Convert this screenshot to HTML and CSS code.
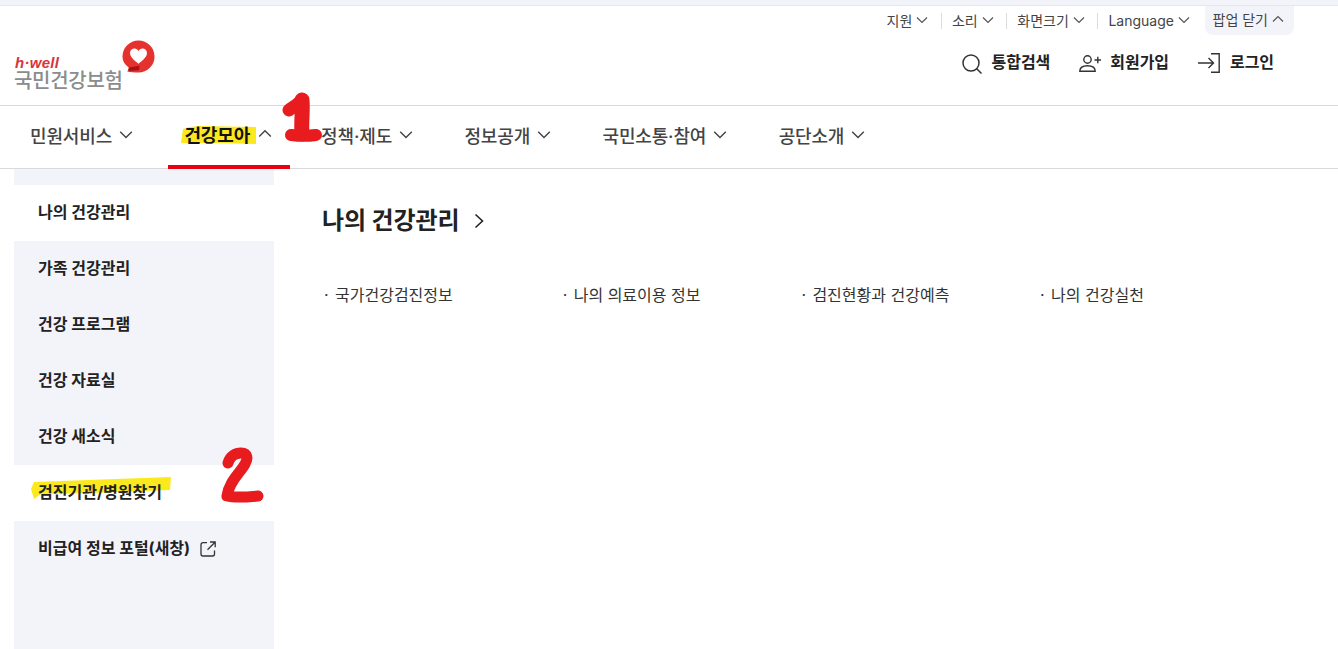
FILE: index.html
```html
<!DOCTYPE html>
<html lang="ko">
<head>
<meta charset="utf-8">
<title>국민건강보험</title>
<link rel="stylesheet" href="styles.css">
</head>
<body>
<svg class="sprite" width="0" height="0" aria-hidden="true">
  <symbol id="down" viewBox="0 0 12 8"><path d="M1 1.500 6 6.500 11 1.500" fill="none" stroke="currentColor" stroke-width="1.200"/></symbol>
  <symbol id="up" viewBox="0 0 12 8"><path d="M1 6.500 6 1.500 11 6.500" fill="none" stroke="currentColor" stroke-width="1.200"/></symbol>
</svg>
<div class="page">
  <div class="top-strip"></div>
  <div class="util">
    <a class="util-item">지원<svg class="chev-s"><use href="#down"/></svg></a>
    <a class="util-item sep">소리<svg class="chev-s"><use href="#down"/></svg></a>
    <a class="util-item sep">화면크기<svg class="chev-s"><use href="#down"/></svg></a>
    <a class="util-item sep">Language<svg class="chev-s"><use href="#down"/></svg></a>
    <a class="util-item popup">팝업 닫기<svg class="chev-s"><use href="#up"/></svg></a>
  </div>
  <header class="brand-row">
    <div class="logo">
      <div class="logo-text">
        <span class="logo-en">h·well</span>
        <span class="logo-ko">국민건강보험</span>
      </div>
      <svg class="logo-mark" viewBox="0 0 36 36">
        <path d="M18 1.500A16.500 16.500 0 1 1 18 34.500C14 34.500 9.500 34.500 6.500 33.500L8.200 29.500C3.800 26.500 1.500 22.500 1.500 18A16.500 16.500 0 0 1 18 1.500Z" fill="#e5322f"/>
        <path d="M8 29.200 19 27.500 18.500 32 8 33Z" fill="#a81216"/>
        <path d="M18 25.500C13 21.500 9.300 18.500 9.300 14.500 9.300 11.500 11.500 9.800 13.800 9.800 15.700 9.800 17.200 10.800 18 12.300 18.800 10.800 20.300 9.800 22.200 9.800 24.500 9.800 26.700 11.500 26.700 14.500 26.700 18.500 23 21.500 18 25.500Z" fill="#fff"/>
      </svg>
    </div>
    <nav class="actions">
      <a class="action">
        <svg class="act-icon search" viewBox="0 0 20 20"><circle cx="9" cy="9" r="8" fill="none" stroke="#333" stroke-width="1.500"/><path d="M14.500 14.500 19.500 19.500" stroke="#333" stroke-width="1.500"/></svg>통합검색</a>
      <a class="action">
        <svg class="act-icon join" viewBox="0 0 22 17"><circle cx="8.500" cy="4.500" r="3.700" fill="none" stroke="#333" stroke-width="1.400"/><path d="M.8 16.200C.8 12.500 3.500 10.800 8.500 10.800S16.200 12.500 16.200 16.200Z" fill="none" stroke="#333" stroke-width="1.400"/><path d="M15.500 5H22M18.800 1.800V8.200" stroke="#333" stroke-width="1.400"/></svg>회원가입</a>
      <a class="action">
        <svg class="act-icon login" viewBox="0 0 22 20"><path d="M13 .8H21.200V19.200H13" fill="none" stroke="#333" stroke-width="1.400"/><path d="M0 10H15.500M10.500 5 15.500 10 10.500 15" fill="none" stroke="#333" stroke-width="1.400"/></svg>로그인</a>
    </nav>
  </header>
  <nav class="gnb">
    <a class="gnb-item">민원서비스<svg class="chev-m"><use href="#down"/></svg></a>
    <a class="gnb-item active"><span class="mark-wrap"><svg class="hl-nav" viewBox="0 0 75 18" preserveAspectRatio="none"><path d="M2 3 8 1 20 0 75 1 75 18 30 17 0 17Z" fill="#fbe91e"/></svg><span class="mark-text">건강모아</span></span><svg class="chev-m"><use href="#up"/></svg></a>
    <a class="gnb-item">정책·제도<svg class="chev-m"><use href="#down"/></svg></a>
    <a class="gnb-item">정보공개<svg class="chev-m"><use href="#down"/></svg></a>
    <a class="gnb-item">국민소통·참여<svg class="chev-m"><use href="#down"/></svg></a>
    <a class="gnb-item">공단소개<svg class="chev-m"><use href="#down"/></svg></a>
  </nav>
  <main class="panel">
    <aside class="side">
      <div class="side-pad"></div>
      <a class="side-item current">나의 건강관리</a>
      <a class="side-item">가족 건강관리</a>
      <a class="side-item">건강 프로그램</a>
      <a class="side-item">건강 자료실</a>
      <a class="side-item">건강 새소식</a>
      <a class="side-item current"><span class="mark-wrap"><svg class="hl-side" viewBox="0 0 140 22" preserveAspectRatio="none"><path d="M3 5 140 0 139 13 60 16 10 17 3 22 0 12Z" fill="#fbe91e"/></svg><span class="mark-text">검진기관/병원찾기</span></span></a>
      <a class="side-item">비급여 정보 포털(새창)
        <svg class="ext" viewBox="0 0 16 16"><path d="M7 1.700H3A2 2 0 0 0 1 3.700V13A2 2 0 0 0 3 15H12.500A2 2 0 0 0 14.500 13V9.500M10 1H15.200V6.200M15 1.200 7.500 8.700" fill="none" stroke="#333" stroke-width="1.300"/></svg>
      </a>
    </aside>
    <section class="content">
      <h2 class="title">나의 건강관리<svg class="title-chev" viewBox="0 0 10 16"><path d="M1.500 1.500 8.500 8 1.500 14.500" fill="none" stroke="#222" stroke-width="1.600"/></svg></h2>
      <ul class="links">
        <li>국가건강검진정보</li>
        <li>나의 의료이용 정보</li>
        <li>검진현황과 건강예측</li>
        <li>나의 건강실천</li>
      </ul>
    </section>
  </main>
  <svg class="scribble one" viewBox="0 0 46 52"><path d="M10 18C15 15 19 12 23 8" fill="none" stroke="#e81c1f" stroke-width="13" stroke-linecap="round" stroke-linejoin="round"/><path d="M23 8C24 20 22 30 23 42" fill="none" stroke="#e81c1f" stroke-width="15" stroke-linecap="round"/><path d="M12 43C20 44 30 44 37 43" fill="none" stroke="#e81c1f" stroke-width="12" stroke-linecap="round"/></svg>
  <svg class="scribble two" viewBox="0 0 55 60"><path d="M13 18C15 11 21 8 26 8 33 8 33 14 30 19 26 27 14 36 12 51 20 53 33 52 43 51" fill="none" stroke="#e81c1f" stroke-width="11" stroke-linecap="round" stroke-linejoin="round"/></svg>
</div>
</body>
</html>
```
FILE: styles.css
```css
* { box-sizing: border-box; }
html, body { margin: 0; height: 100%; }
body {
  background: #fff;
  color: #222;
  font-family: Inter, "Noto Sans CJK KR", sans-serif;
  overflow: hidden;
}
a { color: inherit; text-decoration: none; }
.sprite { position: absolute; }
.page { position: relative; width: 1338px; height: 649px; overflow: hidden; }
.top-strip { height: 6px; background: #f3f4fa; border-bottom: 1px solid #e6e6ee; }

.util {
  display: flex;
  justify-content: flex-end;
  align-items: flex-start;
  height: 29px;
  padding-right: 44px;
  font-size: 14px;
  color: #444;
}
.util-item { display: flex; align-items: center; gap: 4px; height: 28px; padding: 0 12.600px 0 11px; position: relative; }
.util-item.sep::before {
  content: "";
  position: absolute;
  left: 0;
  top: 7px;
  height: 16px;
  width: 1px;
  background: #ddd;
}
.util-item.popup { background: #f3f4fa; border-radius: 0 0 8px 8px; height: 29px; padding: 0 10px 3px 8px; margin-left: 2px; }
.chev-s { width: 12px; height: 8px; color: #555; }

.brand-row {
  display: flex;
  justify-content: space-between;
  height: 71px;
  padding: 0 64px 0 14px;
  border-bottom: 1px solid #d9d9d9;
}
.logo { display: flex; align-items: flex-start; padding-top: 5px; }
.logo-text { display: flex; flex-direction: column; padding-top: 15px; }
.logo-en { font: italic bold 15px/16px "Liberation Sans", sans-serif; color: #d8343a; padding-left: 1px; letter-spacing: 0.3px; }
.logo-ko { font-size: 20px; line-height: 20px; font-weight: 500; color: #8a8d8c; letter-spacing: -0.3px; white-space: nowrap; }
.logo-mark { width: 35px; height: 35px; margin: -1px 0 0 -2px; }

.actions { display: flex; gap: 29px; padding-top: 14px; }
.action { display: flex; align-items: flex-start; font-size: 16px; line-height: 26px; font-weight: 700; color: #222; letter-spacing: -0.05px; gap: 10px; }
.act-icon { flex: none; }
.search { width: 20px; height: 20px; margin-top: 5px; }
.join { width: 22px; height: 17px; margin-top: 6px; margin-right: -1px; }
.login { width: 22px; height: 20px; margin-top: 4px; }

.gnb {
  display: flex;
  height: 63px;
  padding-left: 14px;
  border-bottom: 1px solid #d9d9d9;
}
.gnb-item {
  display: flex;
  align-items: center;
  gap: 7px;
  padding: 0 19px 4px 16px;
  margin-right: 16.400px;
  font-size: 18px;
  font-weight: 500;
  color: #444;
  letter-spacing: -0.15px;
  height: 62px;
}
.gnb-item.active { color: #111; font-weight: 700; border-bottom: 4px solid #e60012; height: 63px; margin-right: 15px; gap: 8px; padding-right: 18px; }
.chev-m { width: 14px; height: 9.300px; color: #444; }
.mark-wrap { position: relative; display: inline-block; }
.mark-text { position: relative; }
.hl-nav { position: absolute; left: -3px; top: 5px; width: 75px; height: 18px; }
.hl-side { position: absolute; left: -7px; top: -2px; width: 140px; height: 22px; }

.panel { display: flex; height: 480px; }
.side { width: 260px; margin-left: 14px; background: #f3f4fa; display: flex; flex-direction: column; }
.side-pad { height: 16px; }
.side-item {
  display: flex;
  align-items: center;
  gap: 10px;
  height: 56px;
  padding: 0 0 4px 24px;
  font-size: 16px;
  font-weight: 700;
  color: #222;
  flex: none;
}
.side-item.current { background: #fff; }
.ext { width: 16px; height: 16px; margin-top: 3px; }

.content { padding: 37px 0 0 48px; flex: 1; }
.title { display: flex; align-items: center; margin: 0; font-size: 24px; line-height: 30px; font-weight: 700; color: #222; letter-spacing: -0.1px; }
.title-chev { width: 10px; height: 16px; margin-left: 15px; }
.links { display: flex; list-style: none; margin: 0; padding: 48px 0 0 2px; font-size: 16px; line-height: 22px; color: #333; }
.links li { width: 238.700px; padding-left: 11px; position: relative; }
.links li::before { content: "·"; position: absolute; left: 0; top: 0; }

.scribble { position: absolute; }
.one { left: 279px; top: 92px; width: 46px; height: 52px; }
.two { left: 215px; top: 445px; width: 55px; height: 60px; }
```
